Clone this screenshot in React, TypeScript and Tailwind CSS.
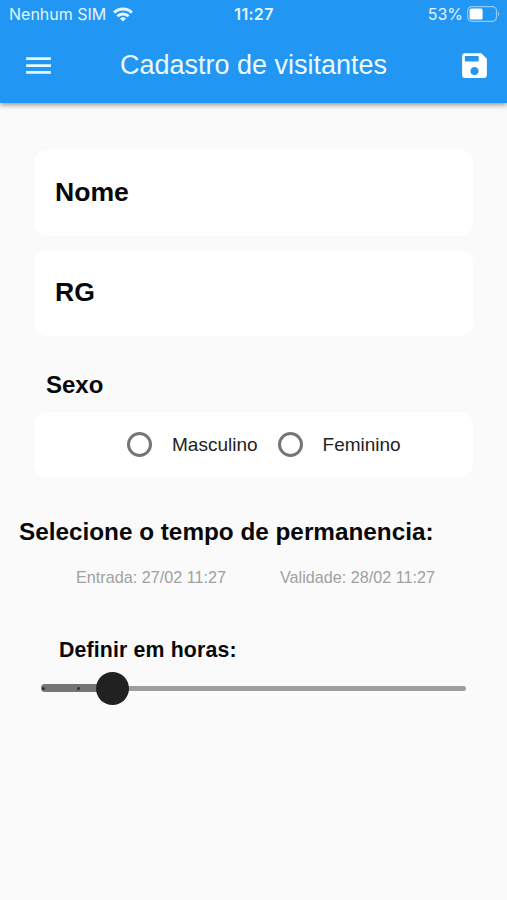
import { useState } from 'react';

const GENDERS = ['Masculino', 'Feminino'];

function WifiIcon() {
  return (
    <svg width="20" height="15" viewBox="0 0 20 15" fill="none" stroke="currentColor" strokeWidth="2.9">
      <path d="M1.1 5.6C6 .7 14 .7 18.9 5.6" />
      <path d="M4.4 9.2C7.4 6.2 12.6 6.2 15.6 9.2" />
      <path d="M10 14.6 6.9 11.5C8.6 9.9 11.4 9.9 13.1 11.5Z" fill="currentColor" stroke="none" />
    </svg>
  );
}

function BatteryIcon() {
  return (
    <svg width="33" height="16" viewBox="0 0 33 16" fill="none">
      <rect x="0.7" y="0.7" width="28.8" height="14.6" rx="4" stroke="white" strokeOpacity="0.5" strokeWidth="1.2" />
      <rect x="2.6" y="2.6" width="13" height="10.8" rx="1.5" fill="white" />
      <path d="M31 5.6c1.6.7 1.6 4.1 0 4.8Z" fill="white" fillOpacity="0.5" />
    </svg>
  );
}

function StatusBar() {
  return (
    <div className="grid h-[28px] grid-cols-3 items-center pr-[7px] pl-[9px] font-['Inter',sans-serif] text-[16px] text-[#e3f5ff]">
      <div className="flex items-center gap-[7px] whitespace-nowrap">
        <span>Nenhum SIM</span>
        <WifiIcon />
      </div>
      <span className="pr-px text-center font-semibold tracking-[0.3px]">11:27</span>
      <div className="flex items-center justify-end gap-1">
        <span>53%</span>
        <BatteryIcon />
      </div>
    </div>
  );
}

// --- Blue bar with the menu and save actions ---
function AppBar() {
  return (
    <header className="h-[103px] bg-[#2196f3] text-white shadow-[0_2px_5px_rgba(0,0,0,0.4)]">
      <StatusBar />
      <div className="flex h-[74px] items-center justify-between pr-[16px] pl-[22px]">
        <button type="button" aria-label="Menu">
          <svg width="33" height="33" viewBox="0 0 24 24" fill="#e8f8ff">
            <path d="M3 18h18v-2H3v2zm0-5h18v-2H3v2zm0-7v2h18V6H3z" />
          </svg>
        </button>
        <h1 className="pr-[6px] text-[27px] leading-8 text-[#ecf9ff]">Cadastro de visitantes</h1>
        <button type="button" aria-label="Salvar">
          <svg width="33" height="33" viewBox="0 0 24 24" fill="white">
            <path d="M17 3H5c-1.11 0-2 .9-2 2v14c0 1.1.89 2 2 2h14c1.1 0 2-.9 2-2V7l-4-4zm-5 16c-1.66 0-3-1.34-3-3s1.34-3 3-3 3 1.34 3 3-1.34 3-3 3zm3-10H5V5h10v4z" />
          </svg>
        </button>
      </div>
    </header>
  );
}

function Field({ label }: { label: string }) {
  return (
    <div className="flex h-[86px] items-center rounded-[13px] bg-white px-[21px] text-[26.6px] font-bold">
      {label}
    </div>
  );
}

function HoursSlider() {
  return (
    <div className="relative mx-[41px] mt-[7px] flex h-[34px] items-center">
      <div className="flex h-[8px] w-[71px] items-center rounded-l-full bg-[#757575] pl-[1px]">
        <span className="size-[3px] rounded-full bg-[#303030]" />
        <span className="ml-[32px] size-[3px] rounded-full bg-[#303030]" />
      </div>
      <div className="h-[5px] flex-1 rounded-r-full bg-[#9e9e9e]" />
      {/* thumb */}
      <div className="absolute top-[0.5px] left-[54.5px] size-[33px] rounded-full bg-[#212121]" />
    </div>
  );
}

export default function App() {
  const [gender, setGender] = useState<string | null>(null);

  return (
    <div className="h-[900px] w-[507px] overflow-hidden bg-[#fafafa] font-['Liberation_Sans',sans-serif] text-[#080808]">
      <AppBar />
      <main className="pt-[47px]">
        <div className="mx-[34px] space-y-[14px]">
          <Field label="Nome" />
          <Field label="RG" />
        </div>

        <h2 className="mt-[33px] ml-[46px] text-[24px] leading-8 font-bold">Sexo</h2>
        <div className="mx-[34px] mt-[11px] flex h-[65px] items-center rounded-[13px] bg-white pl-[93px]">
          {GENDERS.map((g) => (
            <button key={g} type="button" onClick={() => setGender(g)} className="mr-[20px] flex items-center gap-[20px]">
              <span className="flex size-[25px] items-center justify-center rounded-full border-3 border-[#757575]">
                {gender === g && <span className="size-3 rounded-full bg-[#212121]" />}
              </span>
              <span className="pt-[2px] text-[19px] text-[#222]">{g}</span>
            </button>
          ))}
        </div>

        <h2 className="mt-[39px] ml-[19px] text-[24.3px] leading-8 font-bold">Selecione o tempo de permanencia:</h2>
        <div className="mt-[19px] flex gap-[54px] pl-[76px] text-[16.2px] leading-5 text-[#a0a0a0]">
          <span>Entrada: 27/02 11:27</span>
          <span>Validade: 28/02 11:27</span>
        </div>

        <h3 className="mt-[49px] ml-[59px] text-[21.3px] leading-7 font-bold tracking-[0.15px]">Definir em horas:</h3>
        <HoursSlider />
      </main>
    </div>
  );
}
